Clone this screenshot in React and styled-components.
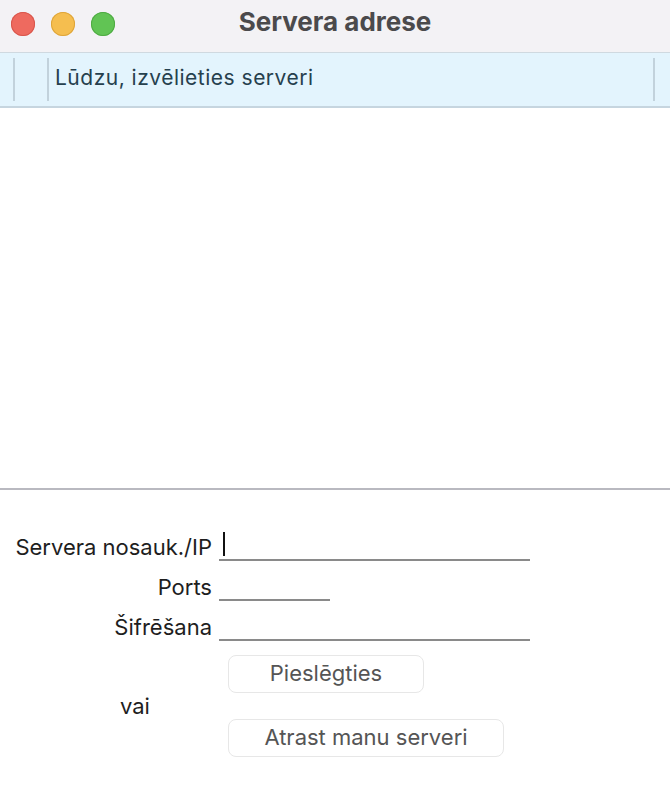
import React from "react";
import styled, { createGlobalStyle } from "styled-components";

const GlobalStyle = createGlobalStyle`
  html, body {
    margin: 0;
    padding: 0;
    background: #ffffff;
  }
  body {
    font-family: Inter, "Noto Sans", "Liberation Sans", sans-serif;
  }
`;

const Window = styled.div`
  width: 670px;
  height: 792px;
  display: flex;
  flex-direction: column;
  background: #ffffff;
  overflow: hidden;
`;

const TitleBar = styled.div`
  height: 52px;
  flex-shrink: 0;
  display: flex;
  align-items: center;
  position: relative;
  background: #f3f2f5;
  border-bottom: 1px solid #cfd9e0;
`;

const Lights = styled.div`
  display: flex;
  gap: 16px;
  padding-left: 11px;
  padding-bottom: 4px;
`;

const Light = styled.span`
  width: 24px;
  height: 24px;
  border-radius: 50%;
  background: ${(p) => p.color};
  box-shadow: inset 0 0 0 1px ${(p) => p.edge};
`;

const Title = styled.div`
  position: absolute;
  left: 0;
  right: 0;
  top: 6px;
  text-align: center;
  font-size: 26px;
  font-weight: 700;
  color: #4b4a4c;
  pointer-events: none;
`;

const HeaderRow = styled.div`
  height: 53px;
  flex-shrink: 0;
  display: flex;
  align-items: center;
  background: #e3f4fd;
  border-bottom: 2px solid #c6d5df;
  padding-left: 13px;
  padding-right: 15px;
`;

const Divider = styled.span`
  width: 2px;
  align-self: stretch;
  margin: 5px 0 5px;
  background: #c2d2dc;
`;

const Gap = styled.span`
  width: ${(p) => p.w}px;
`;

const HeaderText = styled.span`
  flex: 1;
  font-size: 21px;
  letter-spacing: 0.5px;
  color: #26404e;
  padding-left: 6px;
  padding-bottom: 5px;
`;

const ServerList = styled.div`
  flex: 1;
  background: #ffffff;
  border-bottom: 2px solid #b9b9c0;
`;

const Form = styled.div`
  height: 302px;
  flex-shrink: 0;
  padding-top: 31px;
  box-sizing: border-box;
`;

const Row = styled.div`
  display: flex;
  align-items: flex-end;
  height: 40px;
`;

const Label = styled.label`
  width: 212px;
  text-align: right;
  font-size: 22px;
  line-height: 26px;
  color: #1e1e1e;
  padding-bottom: 1px;
  white-space: nowrap;
`;

const Field = styled.div`
  position: relative;
  margin-left: 7px;
  width: ${(p) => p.w}px;
  height: 28px;
  border-bottom: 2px solid #8a8a8a;
`;

const Caret = styled.span`
  position: absolute;
  left: 4px;
  bottom: 3px;
  width: 2px;
  height: 24px;
  background: #111111;
`;

const Actions = styled.div`
  display: flex;
  flex-direction: column;
  padding-top: 14px;
`;

const Button = styled.button`
  margin-left: 228px;
  width: ${(p) => p.w}px;
  height: 38px;
  border: 1px solid #e7e7e7;
  border-radius: 8px;
  background: #ffffff;
  font-family: inherit;
  font-size: 22px;
  color: #555555;
  padding: 0 0 2px;
`;

const OrText = styled.div`
  height: 26px;
  line-height: 26px;
  padding-left: 120px;
  font-size: 22px;
  color: #1e1e1e;
`;

export default function App() {
  return (
    <Window>
      <GlobalStyle />
      <TitleBar>
        <Lights>
          <Light color="#ee6a5f" edge="#d8574d" />
          <Light color="#f5be4f" edge="#dea53a" />
          <Light color="#61c454" edge="#4faa43" />
        </Lights>
        <Title>Servera adrese</Title>
      </TitleBar>
      <HeaderRow>
        <Divider />
        <Gap w={32} />
        <Divider />
        <HeaderText>Lūdzu, izvēlieties serveri</HeaderText>
        <Divider />
      </HeaderRow>
      <ServerList />
      <Form>
        <Row>
          <Label>Servera nosauk./IP</Label>
          <Field w={311}>
            <Caret />
          </Field>
        </Row>
        <Row>
          <Label>Ports</Label>
          <Field w={111} />
        </Row>
        <Row>
          <Label>Šifrēšana</Label>
          <Field w={311} />
        </Row>
        <Actions>
          <Button w={196}>Pieslēgties</Button>
          <OrText>vai</OrText>
          <Button w={276}>Atrast manu serveri</Button>
        </Actions>
      </Form>
    </Window>
  );
}
